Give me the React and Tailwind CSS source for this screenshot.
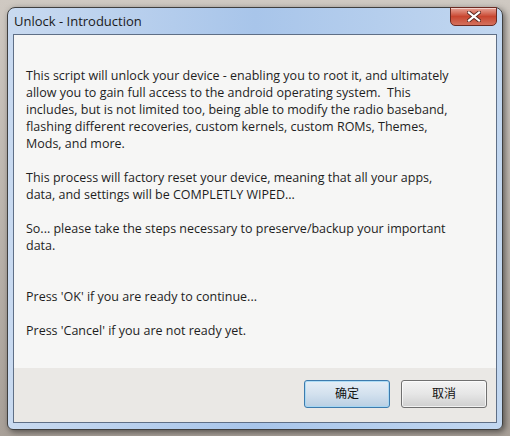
import React from "react";

const paragraphs = [
  [
    "This script will unlock your device - enabling you to root it, and ultimately",
    "allow you to gain full access to the android operating system.\u00a0 This",
    "includes, but is not limited too, being able to modify the radio baseband,",
    "flashing different recoveries, custom kernels, custom ROMs, Themes,",
    "Mods, and more.",
  ],
  [
    "This process will factory reset your device, meaning that all your apps,",
    "data, and settings will be COMPLETLY WIPED...",
  ],
  ["So... please take the steps necessary to preserve/backup your important", "data."],
];

const CloseIcon = () => (
  <svg width="14" height="11" viewBox="0 0 14 11">
    <path d="M2 1.5 L12 9.5 M12 1.5 L2 9.5" stroke="#5a2a22" strokeWidth="4" strokeLinecap="square" />
    <path d="M2 1.5 L12 9.5 M12 1.5 L2 9.5" stroke="#ffffff" strokeWidth="2.2" strokeLinecap="square" />
  </svg>
);

const App = () => {
  return (
    <div className="w-[510px] h-[436px] bg-gradient-to-b from-[#cfc9c2] to-[#a8a098] pt-[7px] px-[7px] overflow-hidden">
      <div
        className="w-[496px] h-[423px] rounded-t-[8px] rounded-b-[6px] border border-[#3f3f3f] bg-gradient-to-r from-[#c9daf0] via-[#a8c5ea] to-[#c2d7f0] flex flex-col px-[5px] pb-[6px] shadow-[2px_2px_6px_rgba(0,0,0,0.5)]"
        style={{ fontFamily: '"Open Sans", "Noto Sans CJK SC", sans-serif' }}
      >
        {/* title bar */}
        <div className="h-[26px] flex justify-between">
          <span className="pl-[1px] pt-[3px] text-[13px] text-[#1a1a1a] leading-[20px]">
            Unlock - Introduction
          </span>
          <button className="w-[47px] h-[19px] -mt-[1px] rounded-b-[5px] border border-[#6b2a22] bg-gradient-to-b from-[#e6a498] via-[#c8452f] to-[#d4705c] flex items-center justify-center shadow-[inset_0_1px_0_rgba(255,255,255,0.5)]">
            <CloseIcon />
          </button>
        </div>

        {/* client area */}
        <div className="flex-1 border border-[#5f6f86] flex flex-col bg-[#f6f6f5]">
          <div className="flex-1 pl-[12px] pt-[32px] text-[12.5px] leading-[17px] text-[#1e1e1e] flex flex-col gap-[17px]">
            {paragraphs.map((p, i) => (
              <p key={i}>
                {p.map((line, j) => (
                  <span key={j} className="block whitespace-pre">
                    {line}
                  </span>
                ))}
              </p>
            ))}
            <div className="flex flex-col gap-[17px] pt-[17px]">
              <p>Press 'OK' if you are ready to continue...</p>
              <p>Press 'Cancel' if you are not ready yet.</p>
            </div>
          </div>

          <div className="h-[54px] bg-[#eae8e5] flex justify-end items-start pt-[12px] pr-[9px] gap-[11px]">
            <button className="w-[86px] h-[28px] rounded-[3px] border border-[#3d7bad] bg-gradient-to-b from-[#e6eef6] via-[#d3e1ee] to-[#b9cfe3] text-[12px] text-[#111] shadow-[inset_0_0_0_1px_rgba(160,215,245,0.8)]">
              确定
            </button>
            <button className="w-[86px] h-[28px] rounded-[3px] border border-[#707070] bg-gradient-to-b from-[#f3f3f3] via-[#e6e6e6] to-[#cfcfcf] text-[12px] text-[#111] shadow-[inset_0_0_0_1px_rgba(255,255,255,0.7)]">
              取消
            </button>
          </div>
        </div>
      </div>
    </div>
  );
};

export default App;
